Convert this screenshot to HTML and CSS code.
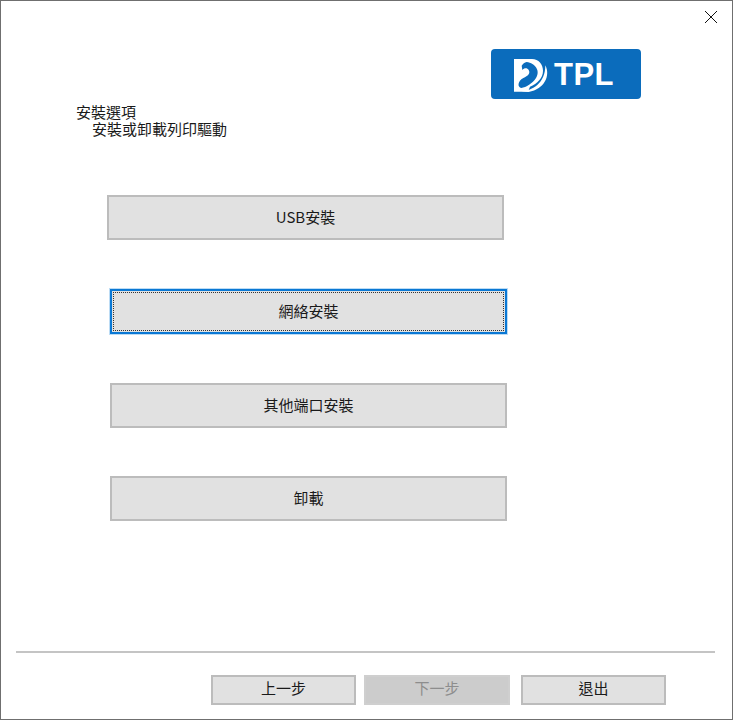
FILE: index.html
```html
<!DOCTYPE html>
<html lang="zh-Hant">
<head>
<meta charset="utf-8">
<title>安裝選項</title>
<link rel="stylesheet" href="styles.css">
</head>
<body>
<div class="window">
  <div class="close-row">
    <svg class="close-icon" width="14" height="14" viewBox="0 0 14 14"><path d="M1 1L13 13M13 1L1 13" stroke="#111" stroke-width="1" fill="none"/></svg>
  </div>
  <div class="logo-row">
    <div class="logo">
      <svg class="logo-mark" width="48" height="48" viewBox="0 0 144 144">
        <path d="M18 27H72C92 27 105 44 105 62C105 84 88 100 66 110L60 125H18Z" fill="#fff"/>
        <path d="M112 46C128 76 110 118 62 126L40 124C74 122 112 100 112 46Z" fill="#fff"/>
        <path d="M56 36C82 40 98 62 84 84C74 100 54 112 40 114C28 112 28 94 46 84C60 78 68 70 62 60C58 53 48 54 43 60L41 47C44 42 50 37 56 36Z" fill="#0b6cbc"/>
      </svg>
      <span class="logo-text">TPL</span>
    </div>
  </div>
  <div class="heading">
    <div>安裝選項</div>
    <div class="heading-sub">安裝或卸載列印驅動</div>
  </div>
  <div class="options">
    <button class="btn option option-first">USB安裝</button>
    <button class="btn option option-focus"><span class="focus-ring">網絡安裝</span></button>
    <button class="btn option option-third">其他端口安裝</button>
    <button class="btn option option-last">卸載</button>
  </div>
  <div class="footer">
    <hr class="rule">
    <div class="nav">
      <button class="btn nav-btn">上一步</button>
      <button class="btn nav-btn nav-disabled" disabled>下一步</button>
      <button class="btn nav-btn nav-exit">退出</button>
    </div>
  </div>
</div>
</body>
</html>
```
FILE: styles.css
```css
html, body {
  margin: 0;
  padding: 0;
  background: #fff;
}
.window {
  box-sizing: border-box;
  width: 733px;
  height: 720px;
  border: 1px solid #6f6f6f;
  display: flex;
  flex-direction: column;
  background: #fff;
  font-family: "Noto Sans CJK TC", "Liberation Sans", sans-serif;
  font-size: 15px;
  color: #1a1a1a;
  overflow: hidden;
}
.close-row {
  height: 48px;
  display: flex;
  justify-content: flex-end;
  align-items: flex-start;
  padding: 9px 14px 0 0;
  box-sizing: border-box;
}
.logo-row {
  display: flex;
  padding-left: 490px;
}
.logo {
  width: 150px;
  height: 50px;
  background: #0b6cbc;
  border-radius: 4px;
  display: flex;
  align-items: center;
  padding-left: 17px;
  box-sizing: border-box;
}
.logo-mark {
  flex: none;
  margin-right: -2px;
}
.logo-text {
  font-family: "Liberation Sans", sans-serif;
  font-weight: 700;
  font-size: 31px;
  letter-spacing: 0.5px;
  color: #fff;
  line-height: 1;
}
.heading {
  margin: 5px 0 0 75px;
  line-height: 17px;
  font-family: "Liberation Sans", "Noto Sans CJK TC", sans-serif;
}
.heading-sub {
  padding-left: 16px;
}
.options {
  display: flex;
  flex-direction: column;
  align-items: flex-start;
  padding: 57px 0 0 109px;
}
.btn {
  box-sizing: border-box;
  margin: 0;
  padding: 0 0 3px;
  background: #e1e1e1;
  border: 2px solid #bcbcbc;
  font: inherit;
  color: #1a1a1a;
  display: flex;
  align-items: center;
  justify-content: center;
}
.option {
  width: 397px;
  height: 45px;
}
.option-first {
  margin-left: -3px;
}
.option-focus {
  margin-top: 49px;
  border: 2px solid #0a78d4;
  padding: 1px;
  box-shadow: 0 0 0 1px #bcdcf5;
}
.focus-ring {
  flex: 1;
  align-self: stretch;
  display: flex;
  align-items: center;
  justify-content: center;
  border: 1px dotted #333;
  padding-bottom: 2px;
}
.option-third {
  margin-top: 49px;
}
.option-last {
  margin-top: 48px;
}
.footer {
  margin-top: auto;
  padding: 0 17px 14px 15px;
}
.rule {
  margin: 0;
  height: 2px;
  border: 0;
  background: #c4c4c4;
}
.nav {
  display: flex;
  padding: 22px 0 0 195px;
  gap: 8px;
}
.nav-btn {
  width: 145px;
  height: 30px;
  font-size: 15px;
  padding-bottom: 6px;
}
.nav-disabled {
  width: 146px;
  background: #cccccc;
  border-color: #cfcfcf;
  color: #8d8d8d;
}
.nav-exit {
  margin-left: 3px;
}
```
